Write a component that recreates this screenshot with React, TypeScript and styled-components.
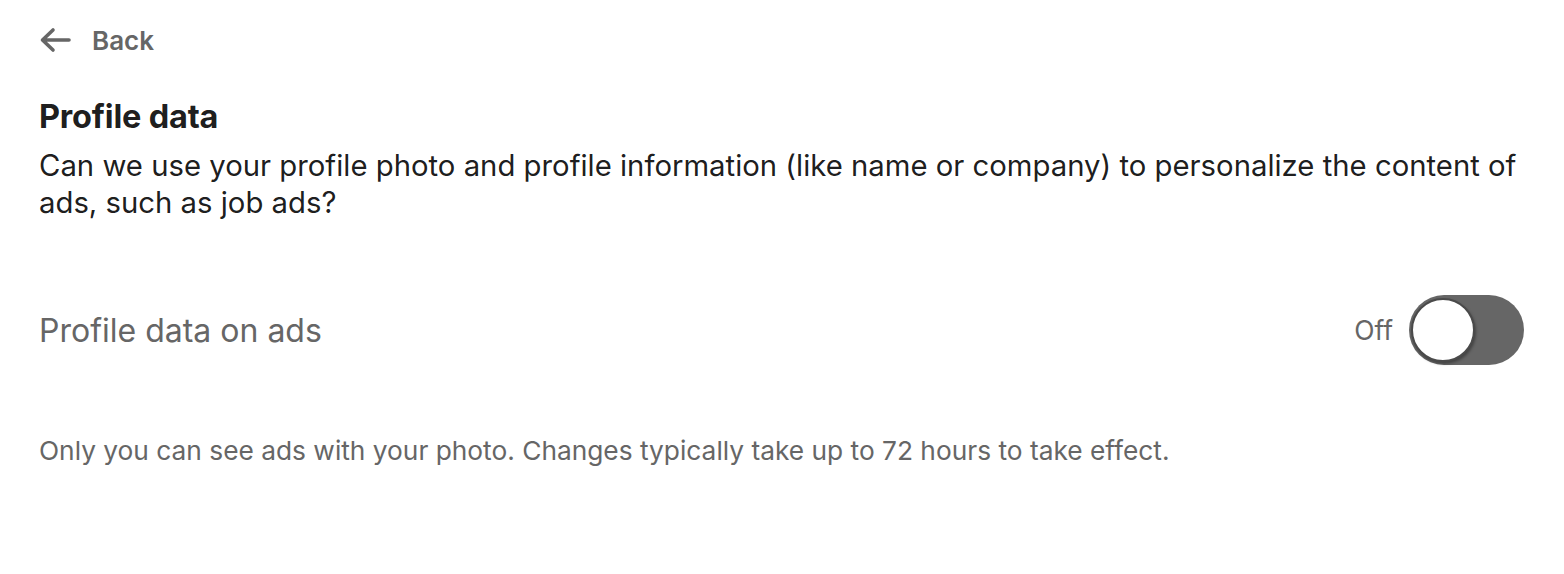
import React from "react"
import styled, { createGlobalStyle } from "styled-components"

const GlobalStyle = createGlobalStyle`
  body {
    margin: 0;
    background: #ffffff;
    font-family: Inter, "Noto Sans", "Liberation Sans", sans-serif;
    -webkit-font-smoothing: antialiased;
  }
`

const ArrowLeft: React.FunctionComponent = () => (
  <svg width="32" height="28" viewBox="0 0 32 28" fill="none">
    <path
      d="M30 14H5M14 4L3.5 14L14 24"
      stroke="#666666"
      strokeWidth="3.6"
      strokeLinecap="round"
      strokeLinejoin="round"
    />
  </svg>
)

const App: React.FunctionComponent = () => {
  return (
    <>
      <GlobalStyle />
      <Page>
        <BackLink href="#">
          <ArrowLeft />
          <BackText>Back</BackText>
        </BackLink>
        <Title>Profile data</Title>
        <Description>
          Can we use your profile photo and profile information (like name or company) to
          personalize the content of ads, such as job ads?
        </Description>
        <SettingRow>
          <SettingLabel>Profile data on ads</SettingLabel>
          <ToggleGroup>
            <ToggleState>Off</ToggleState>
            <Toggle role="switch" aria-checked={false}>
              <Thumb />
            </Toggle>
          </ToggleGroup>
        </SettingRow>
        <Footnote>
          Only you can see ads with your photo. Changes typically take up to 72 hours to take
          effect.
        </Footnote>
      </Page>
    </>
  )
}

const Page = styled.div`
  padding: 24px 40px 0 39px;
  box-sizing: border-box;
  width: 1564px;
`

const BackLink = styled.a`
  display: flex;
  align-items: center;
  gap: 21px;
  height: 32px;
  text-decoration: none;
  color: #666666;
`

const BackText = styled.span`
  font-size: 26px;
  font-weight: 600;
`

const Title = styled.h2`
  margin: 41px 0 0;
  font-size: 32.5px;
  line-height: 40px;
  font-weight: 700;
  letter-spacing: -0.2px;
  color: rgba(0, 0, 0, 0.9);
`

const Description = styled.p`
  margin: 10px 0 0;
  max-width: 1490px;
  font-size: 29.3px;
  line-height: 37px;
  font-weight: 400;
  color: rgba(0, 0, 0, 0.9);
`

const SettingRow = styled.div`
  display: flex;
  align-items: center;
  justify-content: space-between;
  margin-top: 74px;
`

const SettingLabel = styled.span`
  font-size: 32px;
  color: #666666;
`

const ToggleGroup = styled.div`
  display: flex;
  align-items: center;
  gap: 16px;
`

const ToggleState = styled.span`
  font-size: 26.5px;
  color: #666666;
`

const Toggle = styled.button`
  position: relative;
  width: 115px;
  height: 70px;
  border: none;
  border-radius: 35px;
  background: #666666;
  padding: 0;
  cursor: pointer;
`

const Thumb = styled.span`
  position: absolute;
  left: 2px;
  top: 3px;
  width: 60px;
  height: 60px;
  border-radius: 50%;
  background: #ffffff;
  border: 2px solid #4a4a4a;
  box-shadow: 1px 2px 3px rgba(0, 0, 0, 0.35);
`

const Footnote = styled.p`
  margin: 69px 0 0;
  font-size: 26.3px;
  line-height: 34px;
  color: #666666;
`

export default App
